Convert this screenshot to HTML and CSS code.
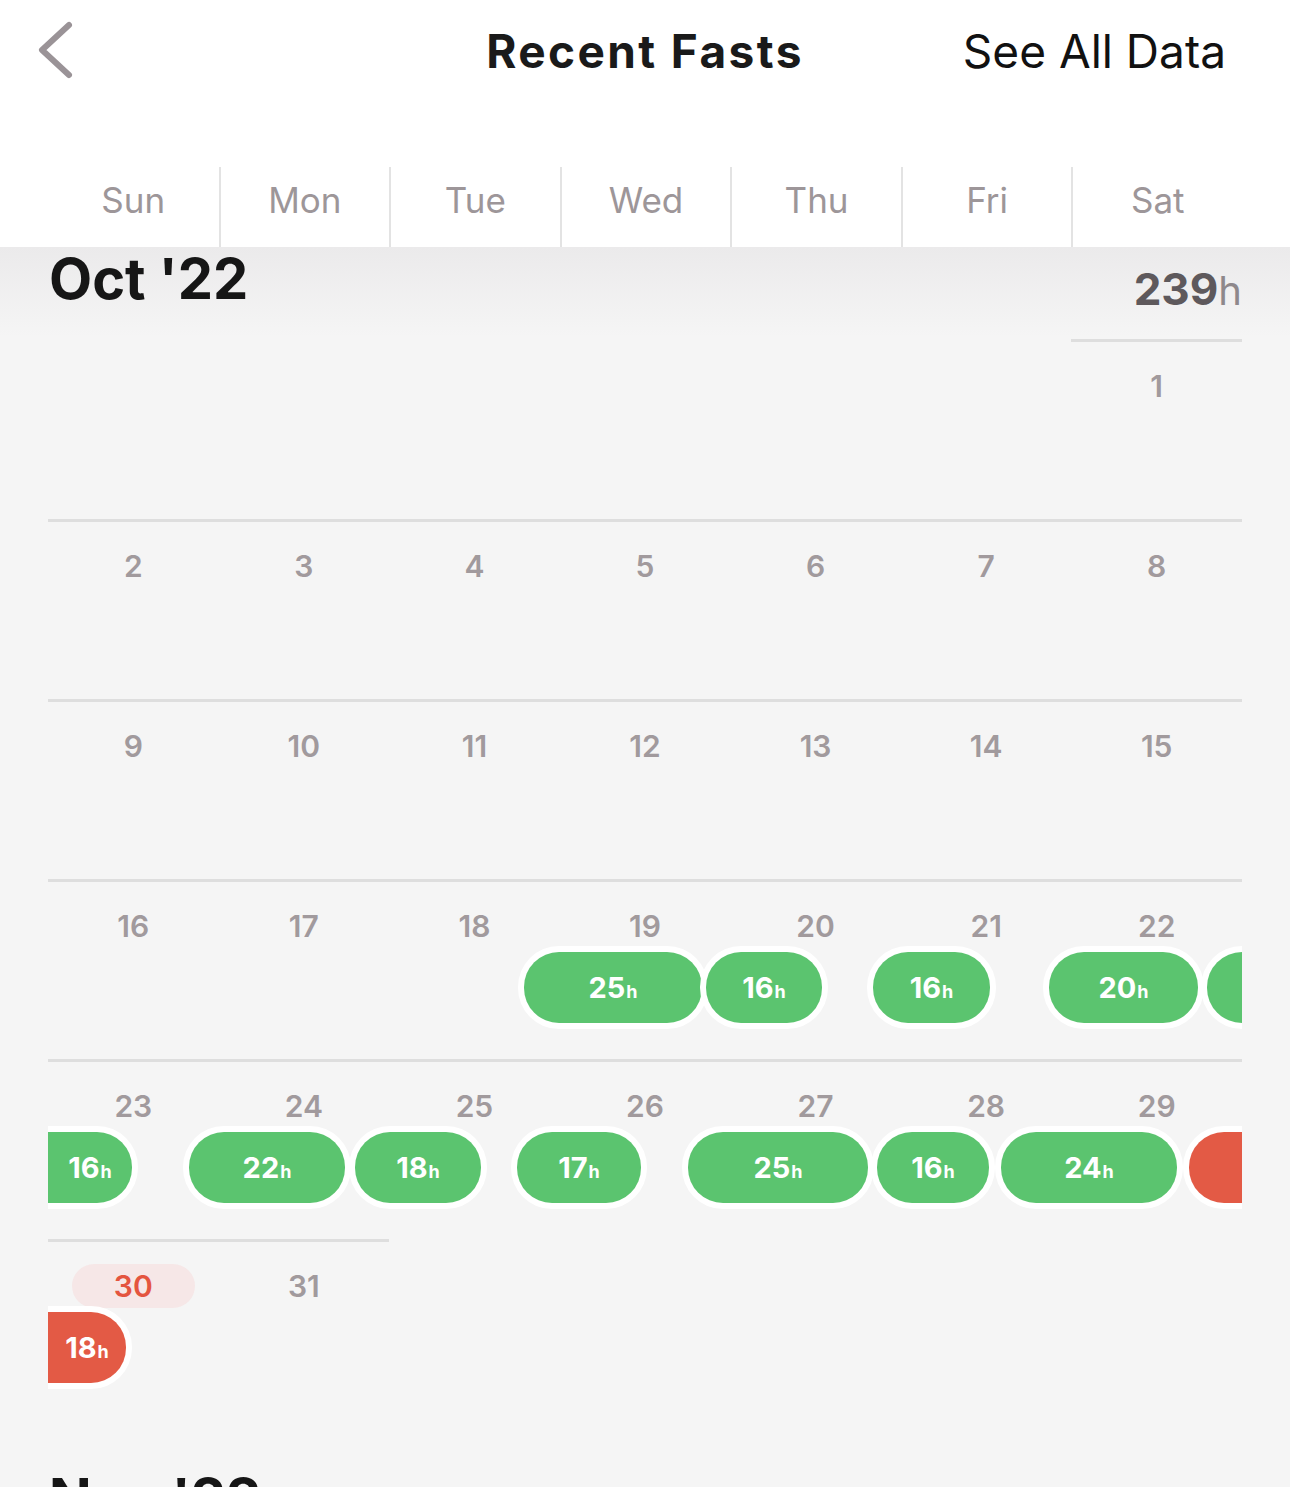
FILE: index.html
```html
<!DOCTYPE html>
<html lang="en">
<head>
    <meta charset="UTF-8">
    <meta name="viewport" content="width=device-width, initial-scale=1.0">
    <title>Recent Fasts</title>
    <link rel="stylesheet" href="styles.css">
</head>
<body>
    <div class="top">
        <header class="topbar">
            <button class="back" aria-label="Back">
                <svg width="40" height="64" viewBox="0 0 40 64">
                    <path d="M33 6 L6 31 L33 56" fill="none" stroke="#9a9397" stroke-width="6" stroke-linecap="round" stroke-linejoin="round"/>
                </svg>
            </button>
            <h1 class="title">Recent Fasts</h1>
            <a class="see-all" href="#">See All Data</a>
        </header>
        <div class="weekdays">
            <span>Sun</span><span>Mon</span><span>Tue</span><span>Wed</span><span>Thu</span><span>Fri</span><span>Sat</span>
        </div>
    </div>

    <main class="calendar">
        <section class="month">
            <div class="month-head">
                <h2 class="month-name">Oct '22</h2>
                <div class="month-total">239<small>h</small></div>
            </div>

            <div class="week">
                <div class="day empty"></div><div class="day empty"></div><div class="day empty"></div>
                <div class="day empty"></div><div class="day empty"></div><div class="day empty"></div>
                <div class="day">1</div>
            </div>
            <div class="week">
                <div class="day">2</div><div class="day">3</div><div class="day">4</div><div class="day">5</div>
                <div class="day">6</div><div class="day">7</div><div class="day">8</div>
            </div>
            <div class="week">
                <div class="day">9</div><div class="day">10</div><div class="day">11</div><div class="day">12</div>
                <div class="day">13</div><div class="day">14</div><div class="day">15</div>
            </div>
            <div class="week">
                <div class="day">16</div><div class="day">17</div><div class="day">18</div><div class="day">19</div>
                <div class="day">20</div><div class="day">21</div><div class="day">22</div>
                <div class="pill" style="left: 476px; width: 178px;"><span>25<small>h</small></span></div>
                <div class="pill" style="left: 658px; width: 116px;"><span>16<small>h</small></span></div>
                <div class="pill" style="left: 825px; width: 117px;"><span>16<small>h</small></span></div>
                <div class="pill" style="left: 1001px; width: 149px;"><span>20<small>h</small></span></div>
                <div class="pill open-right" style="left: 1159px; width: 60px;"></div>
            </div>
            <div class="week">
                <div class="day">23</div><div class="day">24</div><div class="day">25</div><div class="day">26</div>
                <div class="day">27</div><div class="day">28</div><div class="day">29</div>
                <div class="pill open-left" style="left: 0; width: 84px;"><span>16<small>h</small></span></div>
                <div class="pill" style="left: 141px; width: 156px;"><span>22<small>h</small></span></div>
                <div class="pill" style="left: 307px; width: 126px;"><span>18<small>h</small></span></div>
                <div class="pill" style="left: 469px; width: 124px;"><span>17<small>h</small></span></div>
                <div class="pill" style="left: 640px; width: 180px;"><span>25<small>h</small></span></div>
                <div class="pill" style="left: 829px; width: 112px;"><span>16<small>h</small></span></div>
                <div class="pill" style="left: 953px; width: 176px;"><span>24<small>h</small></span></div>
                <div class="pill red open-right" style="left: 1141px; width: 80px;"></div>
            </div>
            <div class="week">
                <div class="day"><span class="today">30</span></div><div class="day">31</div>
                <div class="day empty"></div><div class="day empty"></div><div class="day empty"></div>
                <div class="day empty"></div><div class="day empty"></div>
                <div class="pill red open-left" style="left: 0; width: 78px;"><span>18<small>h</small></span></div>
            </div>
        </section>

        <section class="month">
            <div class="month-head">
                <h2 class="month-name">Nov '22</h2>
            </div>
        </section>
    </main>
</body>
</html>
```

FILE: styles.css
```css
body {
    margin: 0;
    font-family: Inter, "Noto Sans", sans-serif;
    background-color: #f5f5f5;
    color: #161616;
}
.top {
    background-color: #fff;
}
.topbar {
    display: grid;
    grid-template-columns: 1fr auto 1fr;
    align-items: start;
    height: 167px;
    box-sizing: border-box;
    padding: 28px 64px 0 64px;
}
.back {
    justify-self: start;
    margin: -9px 0 0 -28px;
    padding: 0;
    border: none;
    background: none;
    cursor: pointer;
}
.back svg {
    display: block;
}
.title {
    margin: 0;
    font-size: 46px;
    font-weight: 700;
    line-height: 1;
    letter-spacing: 2.4px;
    color: #1a1a1a;
}
.see-all {
    justify-self: end;
    font-size: 46px;
    line-height: 1;
    color: #111;
    text-decoration: none;
}
.weekdays {
    display: grid;
    grid-template-columns: repeat(7, 1fr);
    height: 80px;
    margin: 0 48px;
}
.weekdays span {
    padding-top: 16px;
    text-align: center;
    font-size: 35px;
    line-height: 1;
    color: #9d9699;
}
.weekdays span + span {
    border-left: 2px solid #e3e3e3;
}
.calendar {
    padding: 0 48px;
    background: linear-gradient(#ebeaeb, #f5f5f5 90px);
}
.month + .month {
    margin-top: 48px;
}
.month-head {
    display: flex;
    justify-content: space-between;
    align-items: flex-start;
    height: 92px;
}
.month-name {
    margin: 4px 0 0 1px;
    font-size: 56px;
    font-weight: 700;
    line-height: 1;
    color: #161616;
}
.month-total {
    margin-top: 20px;
    font-size: 44px;
    font-weight: 700;
    line-height: 1;
    color: #5e595c;
}
.month-total small {
    font-size: 40px;
    font-weight: 400;
    color: #8e888b;
}
.week {
    position: relative;
    display: grid;
    grid-template-columns: repeat(7, 1fr);
    height: 180px;
    overflow: hidden;
}
.day {
    padding-top: 29px;
    border-top: 3px solid #dedede;
    text-align: center;
    font-size: 30px;
    font-weight: 600;
    line-height: 1;
    color: #a19a9d;
}
.day.empty {
    border-top-color: transparent;
}
.today {
    display: inline-block;
    margin-top: -7px;
    padding: 7px 42px;
    border-radius: 22px;
    background-color: #f6e7e7;
    color: #e4553f;
}
/* fasts drawn over the week */
.pill {
    position: absolute;
    top: 73px;
    height: 71px;
    display: flex;
    align-items: center;
    justify-content: center;
    border-radius: 35px;
    background-color: #5bc46f;
    box-shadow: 0 0 0 6px #fff;
    color: #fff;
    font-size: 29px;
    font-weight: 700;
    line-height: 1;
}
.pill small {
    font-size: 18px;
    font-weight: 700;
    margin-left: 1px;
}
.pill.red {
    background-color: #e35a45;
}
.pill.open-left {
    border-top-left-radius: 0;
    border-bottom-left-radius: 0;
}
.pill.open-right {
    border-top-right-radius: 0;
    border-bottom-right-radius: 0;
}
```
